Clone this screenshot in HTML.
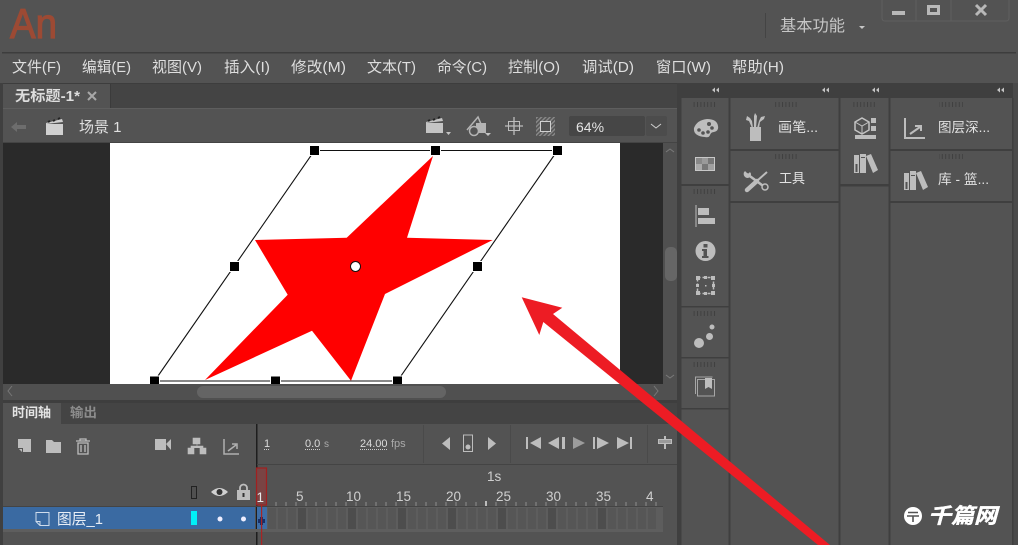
<!DOCTYPE html>
<html><head><meta charset="utf-8"><style>
html,body{margin:0;padding:0;background:#535353;width:1018px;height:545px;overflow:hidden}
svg{display:block}
text{font-family:"Liberation Sans","Noto Sans CJK SC",sans-serif}
.m{font-size:15px;fill:#dedede}
.r{font-size:13.500px;fill:#e2e2e2}
.i{fill:#bdbdbd}
</style></head><body>
<svg width="1018" height="545" viewBox="0 0 1018 545" xmlns="http://www.w3.org/2000/svg">
<defs><pattern id="h" width="3" height="3" patternUnits="userSpaceOnUse" patternTransform="rotate(45)"><rect width="3" height="3" fill="#555"/><rect width="1.4" height="3" fill="#8a8a8a"/></pattern>
<pattern id="g" width="3.4" height="6" patternUnits="userSpaceOnUse"><rect width="1" height="6" fill="#404040"/></pattern></defs>
<rect width="1018" height="545" fill="#535353"/>
<!-- title -->
<text x="10" y="38" font-size="42" fill="#9c4a34" stroke="#9c4a34" stroke-width="1.200" textLength="47" lengthAdjust="spacingAndGlyphs">An</text>
<rect x="2" y="52" width="1014" height="1.5" fill="#3d3d3d"/>
<rect x="765" y="13" width="1" height="25" fill="#444"/>
<text x="780" y="31" font-size="16" fill="#c6c6c6" textLength="65" lengthAdjust="spacingAndGlyphs">基本功能</text>
<path d="M859 26h6l-3 3z" fill="#c6c6c6"/>
<path d="M882 0v18q0 3 3 3h121q3 0 3-3V0M916 0v21M951 0v21" fill="none" stroke="#5f5f5f"/>
<rect x="892" y="11" width="13" height="4" fill="#b8b8b8"/>
<path fill-rule="evenodd" d="M927 5h13v10h-13zM930 8v4h7V8z" fill="#b8b8b8"/>
<path d="M976 5l10 10M986 5l-10 10" stroke="#b8b8b8" stroke-width="3"/>
<!-- menu -->
<text class="m" x="12" y="72" textLength="49" lengthAdjust="spacingAndGlyphs">文件(F)</text>
<text class="m" x="82" y="72" textLength="49" lengthAdjust="spacingAndGlyphs">编辑(E)</text>
<text class="m" x="152" y="72" textLength="50" lengthAdjust="spacingAndGlyphs">视图(V)</text>
<text class="m" x="224" y="72" textLength="46" lengthAdjust="spacingAndGlyphs">插入(I)</text>
<text class="m" x="291" y="72" textLength="55" lengthAdjust="spacingAndGlyphs">修改(M)</text>
<text class="m" x="367" y="72" textLength="49" lengthAdjust="spacingAndGlyphs">文本(T)</text>
<text class="m" x="437" y="72" textLength="50" lengthAdjust="spacingAndGlyphs">命令(C)</text>
<text class="m" x="508" y="72" textLength="52" lengthAdjust="spacingAndGlyphs">控制(O)</text>
<text class="m" x="582" y="72" textLength="52" lengthAdjust="spacingAndGlyphs">调试(D)</text>
<text class="m" x="656" y="72" textLength="55" lengthAdjust="spacingAndGlyphs">窗口(W)</text>
<text class="m" x="732" y="72" textLength="52" lengthAdjust="spacingAndGlyphs">帮助(H)</text>
<!-- layout frame -->
<rect x="0" y="83" width="1018" height="1" fill="#3d3d3d"/>
<rect x="0" y="83" width="3" height="462" fill="#404040"/>
<rect x="677" y="83" width="3" height="462" fill="#3f3f3f"/>
<rect x="1013" y="83" width="5" height="462" fill="#4a4a4a"/>
<!-- tab bar -->
<rect x="3" y="84" width="674" height="25" fill="#444"/>
<rect x="3" y="84" width="107" height="25" fill="#535353"/>
<rect x="110" y="84" width="1" height="25" fill="#3b3b3b"/>
<rect x="3" y="108" width="674" height="1" fill="#5e5e5e"/>
<text x="15" y="101" font-size="14.500" font-weight="bold" fill="#dedede" textLength="65" lengthAdjust="spacingAndGlyphs">无标题-1*</text>
<path d="M88 92l8 8M96 92l-8 8" stroke="#a8a8a8" stroke-width="2"/>
<!-- toolbar -->
<path d="M11 127l6-5v3h9v4h-9v3z" fill="#6d6d6d"/>
<path d="M46 124h17v11h-17z" fill="#d0d0d0"/>
<path d="M46 123l16-4 1 3-17 2z" fill="#d0d0d0"/>
<path d="M48 122l2-1M53 121l2-1M58 119l2-1" stroke="#222" stroke-width="2"/>
<text x="79" y="132" font-size="15" fill="#e0e0e0">场景 1</text>
<path d="M426 123h17v10h-17z" fill="#c4c4c4"/>
<path d="M426 122l16-4 1 3-17 2z" fill="#c4c4c4"/>
<path d="M428 121l2-1M433 120l2-1M438 118l2-1" stroke="#222" stroke-width="2"/>
<path d="M446 132h5l-2.500 3z" fill="#c4c4c4"/>
<path d="M467 130l11-13 3 7" fill="none" stroke="#b4b4b4" stroke-width="1.500"/>
<rect x="476" y="123" width="10" height="10" fill="#b4b4b4"/>
<circle cx="474" cy="131" r="4.500" fill="#535353" stroke="#b4b4b4" stroke-width="1.500"/>
<path d="M485 133h6l-3 3z" fill="#c4c4c4"/>
<path d="M514 117v18M505 126h18" stroke="#bdbdbd" stroke-width="1.300"/>
<rect x="508.500" y="121.500" width="11" height="9" fill="none" stroke="#bdbdbd"/>
<rect x="536" y="117" width="19" height="19" fill="url(#h)"/>
<rect x="540.500" y="121.500" width="10" height="10" fill="#535353" stroke="#d0d0d0"/>
<rect x="569" y="116" width="76" height="20" rx="2" fill="#464646"/>
<rect x="646" y="116" width="21" height="20" rx="2" fill="#4c4c4c"/>
<text x="576" y="132" font-size="14" fill="#e4e4e4">64%</text>
<path d="M651 124l5 4 5-4" fill="none" stroke="#cfcfcf"/>
<rect x="3" y="142" width="674" height="1" fill="#444"/>
<!-- stage -->
<rect x="3" y="143" width="660" height="241" fill="#2a2a2a"/>
<rect x="110" y="143" width="510" height="241" fill="#fff"/>
<rect x="663" y="143" width="14" height="241" fill="#505050"/>
<rect x="665" y="247" width="12" height="34" rx="5" fill="#666"/>
<path d="M666 152l4-3 4 3M666 375l4 3 4-3" fill="none" stroke="#7a7a7a"/>
<polygon fill="#f00" points="255,240 346.700,237.700 433,156 407,237.700 492.700,240 385,294 351,380.700 312,330.700 205,380 287.700,294.700"/>
<path d="M314.500 150.500H557.500L397.500 381H154.500Z" fill="none" stroke="#111" stroke-width="1.100"/>
<g fill="#000" stroke="#fff" stroke-width="1">
<rect x="309.500" y="145.500" width="10" height="10"/><rect x="430.500" y="145.500" width="10" height="10"/><rect x="552.500" y="145.500" width="10" height="10"/>
<rect x="229.500" y="261.500" width="10" height="10"/><rect x="472.500" y="261.500" width="10" height="10"/>
<rect x="149.500" y="376" width="10" height="10"/><rect x="270.500" y="376" width="10" height="10"/><rect x="392.500" y="376" width="10" height="10"/>
</g>
<circle cx="355.500" cy="266.500" r="5" fill="#fff" stroke="#111"/>
<!-- h scroll -->
<rect x="3" y="384" width="674" height="16" fill="#505050"/>
<rect x="197" y="386" width="249" height="12" rx="6" fill="#646464"/>
<path d="M12 386l-4 5 4 5M654 386l4 5-4 5" fill="none" stroke="#787878"/>
<rect x="3" y="400" width="674" height="3" fill="#3e3e3e"/>
<!-- timeline tabs -->
<rect x="3" y="403" width="674" height="21" fill="#444"/>
<rect x="3" y="403" width="58" height="21" fill="#535353"/>
<text x="12" y="417" font-size="13" font-weight="bold" fill="#e4e4e4" textLength="39" lengthAdjust="spacingAndGlyphs">时间轴</text>
<text x="70" y="417" font-size="13" font-weight="bold" fill="#8c8c8c" textLength="27" lengthAdjust="spacingAndGlyphs">输出</text>
<!-- timeline tools -->
<path d="M18 439h13v13h-8v-4h-5z" class="i"/><path d="M19 449h3v3z" class="i"/>
<path d="M46 440h6l2 2h7v11H46z" class="i"/>
<path d="M76 441h14M80 441v-2h6v2M78 443h10v11H78zM81 445v7M85 445v7" fill="none" stroke="#bdbdbd" stroke-width="1.300"/>
<path d="M155 439h11v11h-11zM166 444l5-5v11z" class="i"/>
<path d="M193 438h7v6h-7zM188 448h6v6h-6zM200 448h6v6h-6zM191 448v-2h12v2M197 444v2" class="i" stroke="#bdbdbd" stroke-width=".6"/>
<path d="M224 439v15h15M228 451l8-6M232 444h5v5" fill="none" stroke="#b0b0b0" stroke-width="1.500"/>
<rect x="256" y="424" width="1.500" height="121" fill="#1e1e1e"/>
<rect x="257" y="464" width="420" height="1" fill="#444"/>
<rect x="423" y="425" width="1" height="38" fill="#4a4a4a"/><rect x="510" y="425" width="1" height="38" fill="#4a4a4a"/><rect x="647" y="425" width="1" height="38" fill="#4a4a4a"/>
<text x="264" y="447" font-size="11" fill="#dcdcdc">1</text>
<path d="M264 449.500h5" stroke="#ccc" stroke-dasharray="1 1"/>
<text x="305" y="447" font-size="11" fill="#dcdcdc">0.0</text>
<text x="324" y="447" font-size="10" fill="#aaa">s</text>
<path d="M305 449.500h15" stroke="#ccc" stroke-dasharray="1 1"/>
<text x="360" y="447" font-size="11" fill="#dcdcdc">24.00</text>
<text x="391" y="447" font-size="11" fill="#aaa">fps</text>
<path d="M360 449.500h27" stroke="#ccc" stroke-dasharray="1 1"/>
<path d="M450 437v13l-8-6.500zM488 437v13l8-6.500z" class="i"/>
<rect x="463.500" y="435" width="9" height="16.500" fill="none" stroke="#bdbdbd"/><circle cx="468" cy="447" r="2.500" class="i"/>
<path d="M526 437h2v12h-2zM541 437v12l-11-6zM548 443l11-6v12zM562 437h3v12h-3zM593 437h2v12h-2zM597 437l12 6-12 6zM617 437l12 6-12 6zM630 437h2v12h-2z" class="i"/>
<path d="M573 437l12 6-12 6z" fill="#9c9c9c"/>
<path d="M665 436v13" stroke="#bdbdbd" stroke-width="2"/><rect x="658.500" y="439.500" width="13" height="4" fill="#9a9a9a" stroke="#bdbdbd"/>
<!-- ruler -->
<rect x="191.500" y="486.500" width="5" height="12" fill="#505050" stroke="#222"/>
<path d="M211 492q8.500-8 17 0q-8.500 8-17 0z" fill="#d0d0d0"/><circle cx="219.500" cy="492" r="3" fill="#333"/>
<path d="M240 490v-2a3.500 3.500 0 0 1 7 0v2" fill="none" stroke="#bdbdbd" stroke-width="1.800"/>
<rect x="237" y="490" width="13" height="10" fill="#bdbdbd"/><rect x="242.500" y="493" width="2" height="4" fill="#333"/>
<rect x="256.500" y="468" width="10" height="37" fill="#7a4444" stroke="#a02020" stroke-width="1.200"/>
<text x="256.500" y="502" font-size="13.500" fill="#e8e8e8">1</text>
<g font-size="13.500" fill="#cfcfcf">
<text x="296" y="501">5</text><text x="346" y="501">10</text><text x="396" y="501">15</text><text x="446" y="501">20</text><text x="496" y="501">25</text><text x="546" y="501">30</text><text x="596" y="501">35</text><text x="646" y="501">4</text>
<text x="487" y="481">1s</text></g>
<path d="M276 502v4M286 502v4M296 502v4M306 502v4M316 502v4M326 502v4M336 502v4M346 502v4M356 502v4M366 502v4M376 502v4M386 502v4M396 502v4M406 502v4M416 502v4M426 502v4M436 502v4M446 502v4M456 502v4M466 502v4M476 502v4M496 502v4M506 502v4M516 502v4M526 502v4M536 502v4M546 502v4M556 502v4M566 502v4M576 502v4M586 502v4M596 502v4M606 502v4M616 502v4M626 502v4M636 502v4M646 502v4M656 502v4" stroke="#8c8c8c"/>
<path d="M486 501v5" stroke="#e0e0e0" stroke-width="1.500"/>
<rect x="3" y="506" width="660" height="1" fill="#444"/>
<!-- layer -->
<rect x="3" y="507" width="252" height="22" fill="#3a6aa2"/>
<rect x="3" y="529" width="660" height="3" fill="#5e5e5e"/>
<path d="M36 512.500h13v13h-9l-4-4zM36 521.500h4v4" fill="none" stroke="#cfdcec"/>
<text x="57" y="524" font-size="15" fill="#e8eef6" textLength="46" lengthAdjust="spacingAndGlyphs">图层_1</text>
<rect x="191" y="511" width="6" height="14" fill="#00f0f8"/>
<circle cx="220" cy="519" r="2.500" fill="#eef"/><circle cx="243.500" cy="519" r="2.500" fill="#eef"/>
<rect x="267" y="507" width="396" height="22" fill="#5d5d5d"/>
<g fill="#565656"><rect x="268" y="508" width="8" height="21"/><rect x="278" y="508" width="8" height="21"/><rect x="288" y="508" width="8" height="21"/><rect x="298" y="508" width="8" height="21" fill="#4d4d4d"/><rect x="308" y="508" width="8" height="21"/><rect x="318" y="508" width="8" height="21"/><rect x="328" y="508" width="8" height="21"/><rect x="338" y="508" width="8" height="21"/><rect x="348" y="508" width="8" height="21" fill="#4d4d4d"/><rect x="358" y="508" width="8" height="21"/><rect x="368" y="508" width="8" height="21"/><rect x="378" y="508" width="8" height="21"/><rect x="388" y="508" width="8" height="21"/><rect x="398" y="508" width="8" height="21" fill="#4d4d4d"/><rect x="408" y="508" width="8" height="21"/><rect x="418" y="508" width="8" height="21"/><rect x="428" y="508" width="8" height="21"/><rect x="438" y="508" width="8" height="21"/><rect x="448" y="508" width="8" height="21" fill="#4d4d4d"/><rect x="458" y="508" width="8" height="21"/><rect x="468" y="508" width="8" height="21"/><rect x="478" y="508" width="8" height="21"/><rect x="488" y="508" width="8" height="21"/><rect x="498" y="508" width="8" height="21" fill="#4d4d4d"/><rect x="508" y="508" width="8" height="21"/><rect x="518" y="508" width="8" height="21"/><rect x="528" y="508" width="8" height="21"/><rect x="538" y="508" width="8" height="21"/><rect x="548" y="508" width="8" height="21" fill="#4d4d4d"/><rect x="558" y="508" width="8" height="21"/><rect x="568" y="508" width="8" height="21"/><rect x="578" y="508" width="8" height="21"/><rect x="588" y="508" width="8" height="21"/><rect x="598" y="508" width="8" height="21" fill="#4d4d4d"/><rect x="608" y="508" width="8" height="21"/><rect x="618" y="508" width="8" height="21"/><rect x="628" y="508" width="8" height="21"/><rect x="638" y="508" width="8" height="21"/><rect x="648" y="508" width="8" height="21"/></g>
<rect x="257" y="507" width="10" height="22" fill="#3d6ea8"/>
<rect x="258" y="519" width="7" height="4" fill="#1a2f66"/><rect x="260" y="517" width="3" height="8" fill="#1a2f66"/>
<rect x="261" y="505" width="1.200" height="40" fill="#a82424"/>
<!-- right panels -->
<rect x="680" y="83" width="333" height="15" fill="#3f3f3f"/>
<g fill="#c4c4c4"><path d="M712 90l3-2.500v5zM716 90l3-2.500v5zM822 90l3-2.500v5zM826 90l3-2.500v5zM872 90l3-2.500v5zM876 90l3-2.500v5zM997 90l3-2.500v5zM1001 90l3-2.500v5z"/></g>
<g fill="#3f3f3f">
<rect x="680" y="98" width="1.500" height="447"/><rect x="728.500" y="98" width="2" height="447"/><rect x="838.500" y="98" width="2" height="447"/><rect x="888.500" y="98" width="2" height="447"/><rect x="1012" y="98" width="1.500" height="447"/>
<rect x="681" y="184" width="48" height="2"/><rect x="681" y="306" width="48" height="1.500"/><rect x="681" y="357" width="48" height="1.500"/><rect x="681" y="408" width="48" height="1.500"/>
<rect x="730" y="149" width="109" height="2"/><rect x="730" y="201" width="109" height="2"/>
<rect x="840" y="184" width="49" height="2.500"/>
<rect x="890" y="149" width="123" height="2"/><rect x="890" y="201" width="123" height="2"/>
</g>
<g fill="url(#g)"><rect x="693" y="102" width="24" height="5"/><rect x="693" y="189" width="24" height="5"/><rect x="693" y="311" width="24" height="5"/><rect x="693" y="362" width="24" height="5"/><rect x="773" y="102" width="24" height="5"/><rect x="773" y="154" width="24" height="5"/><rect x="853" y="102" width="24" height="5"/><rect x="939" y="102" width="24" height="5"/><rect x="939" y="154" width="24" height="5"/></g>
<!-- palette -->
<path d="M694 128q3-8 13-9q10 0 11 7q1 5-4 6q-3 0-4 3t-5 2q-12-1-11-9z" class="i"/>
<g fill="#535353"><circle cx="699" cy="130" r="1.800"/><circle cx="703" cy="133" r="1.800"/><circle cx="708" cy="132" r="1.800"/><circle cx="712" cy="128" r="1.800"/><circle cx="709" cy="124" r="2"/></g>
<!-- swatches -->
<rect x="695" y="157" width="20" height="14" fill="#c8c8c8"/><rect x="696" y="158" width="6" height="6" fill="#888"/><rect x="702" y="158" width="6" height="6" fill="#9a9a9a"/><rect x="708" y="158" width="6" height="6" fill="#777"/><rect x="696" y="164" width="6" height="6" fill="#aaa"/><rect x="702" y="164" width="6" height="6" fill="#777"/><rect x="708" y="164" width="6" height="6" fill="#a0a0a0"/>
<!-- align -->
<path d="M696 205v22" stroke="#bdbdbd"/><rect x="698" y="208" width="11" height="7" fill="#bdbdbd"/><rect x="698" y="218" width="17" height="6" fill="#bdbdbd"/>
<!-- info -->
<circle cx="705.500" cy="251" r="10" class="i"/><rect x="703.500" y="244" width="4" height="3.500" fill="#535353"/><path d="M702 249h5v7h1.500v2h-6.500v-2h1.500v-5h-1.500z" fill="#535353"/>
<!-- transform -->
<rect x="697.500" y="277.500" width="16" height="16" fill="none" stroke="#bdbdbd" stroke-width="1.500" stroke-dasharray="3 2"/>
<g class="i"><rect x="696" y="276" width="4" height="4"/><rect x="711" y="276" width="4" height="4"/><rect x="696" y="291" width="4" height="4"/><rect x="711" y="291" width="4" height="4"/><rect x="704" y="276" width="3" height="3"/><rect x="704" y="292" width="3" height="3"/><rect x="696" y="284" width="3" height="3"/><rect x="712" y="284" width="3" height="3"/><rect x="705" y="285" width="1.500" height="1.500"/></g>
<!-- dots -->
<circle cx="699" cy="343" r="5" class="i"/><circle cx="709.500" cy="336.500" r="3.500" class="i"/><circle cx="712" cy="327" r="2.500" class="i"/>
<!-- pages -->
<path d="M695.500 394v-17h17" fill="none" stroke="#a6a6a6"/>
<rect x="697.500" y="379.500" width="17" height="16.500" fill="none" stroke="#a6a6a6"/>
<path d="M705 378h7v11l-3.500-2-3.500 2z" fill="#bdbdbd"/>
<!-- brushes -->
<rect x="750" y="127" width="11" height="14" fill="#bdbdbd"/>
<path d="M752 128l-3-7-3-1 1-4 3 2 2 3 1 7zM754 128l0-12 1-3 2 3-1 12zM757 128l2-7 2-4 4-1-1 3-4 3-1 6z" class="i"/>
<text class="r" x="778" y="132" textLength="40" lengthAdjust="spacingAndGlyphs">画笔...</text>
<!-- tools -->
<path d="M747 174l19 14" stroke="#bdbdbd" stroke-width="2.500"/>
<path d="M745 171a4 4 0 0 0 0 6a4 4 0 0 0 5 0a4 4 0 0 0 0-5l-2 2z" fill="#bdbdbd"/>
<circle cx="765" cy="187" r="3" fill="#535353" stroke="#bdbdbd" stroke-width="1.500"/>
<path d="M758 180l9-8" stroke="#bdbdbd" stroke-width="2"/>
<path d="M747 190l10-9" stroke="#bdbdbd" stroke-width="4.500" stroke-linecap="round"/>
<text class="r" x="779" y="183" textLength="26" lengthAdjust="spacingAndGlyphs">工具</text>
<!-- assets -->
<path d="M855 122l7-4 7 4v8l-7 4-7-4z" fill="none" stroke="#c4c4c4" stroke-width="1.500"/><path d="M855 122l7 4 7-4M862 126v8" fill="none" stroke="#c4c4c4"/>
<rect x="871" y="118" width="5" height="5" fill="#bdbdbd"/><rect x="871" y="126" width="5" height="5" fill="#bdbdbd"/><rect x="855" y="135" width="21" height="4" fill="#bdbdbd"/>
<!-- lib -->
<path d="M854 155h5v18h-5zM860 154h6v19h-6zM866 156l5-2 7 16-5 3z" class="i"/><rect x="855.500" y="164" width="2" height="8" fill="#535353"/><rect x="861" y="157" width="4" height="1" fill="#535353"/>
<path d="M905 118v20h20M910 134l10-7M915 126h6v5" fill="none" stroke="#bdbdbd" stroke-width="2"/>
<text class="r" x="938" y="132" textLength="52" lengthAdjust="spacingAndGlyphs">图层深...</text>
<path d="M904 173h5v17h-5zM910 171h6v19h-6zM916 173l5-2 7 16-5 3z" class="i"/><rect x="905.500" y="182" width="2" height="7" fill="#535353"/><rect x="911" y="175" width="4" height="1" fill="#535353"/>
<text class="r" x="938" y="184" textLength="51" lengthAdjust="spacingAndGlyphs">库 - 篮...</text>
<!-- arrow -->
<polygon fill="#ed1c24" points="521.700,297.300 562.300,307.700 553,314 830,545 818,545 543.300,322 539.300,335"/>
<!-- watermark -->
<circle cx="913" cy="516" r="9" fill="#fff"/><path d="M908 512.500h10M907 516h12M913 516v6" stroke="#535353" stroke-width="1.600"/>
<text x="928" y="523" font-size="21" font-weight="bold" font-style="italic" fill="#fff" stroke="#fff" stroke-width=".4" textLength="69" lengthAdjust="spacingAndGlyphs">千篇网</text>
</svg>
</body></html>
